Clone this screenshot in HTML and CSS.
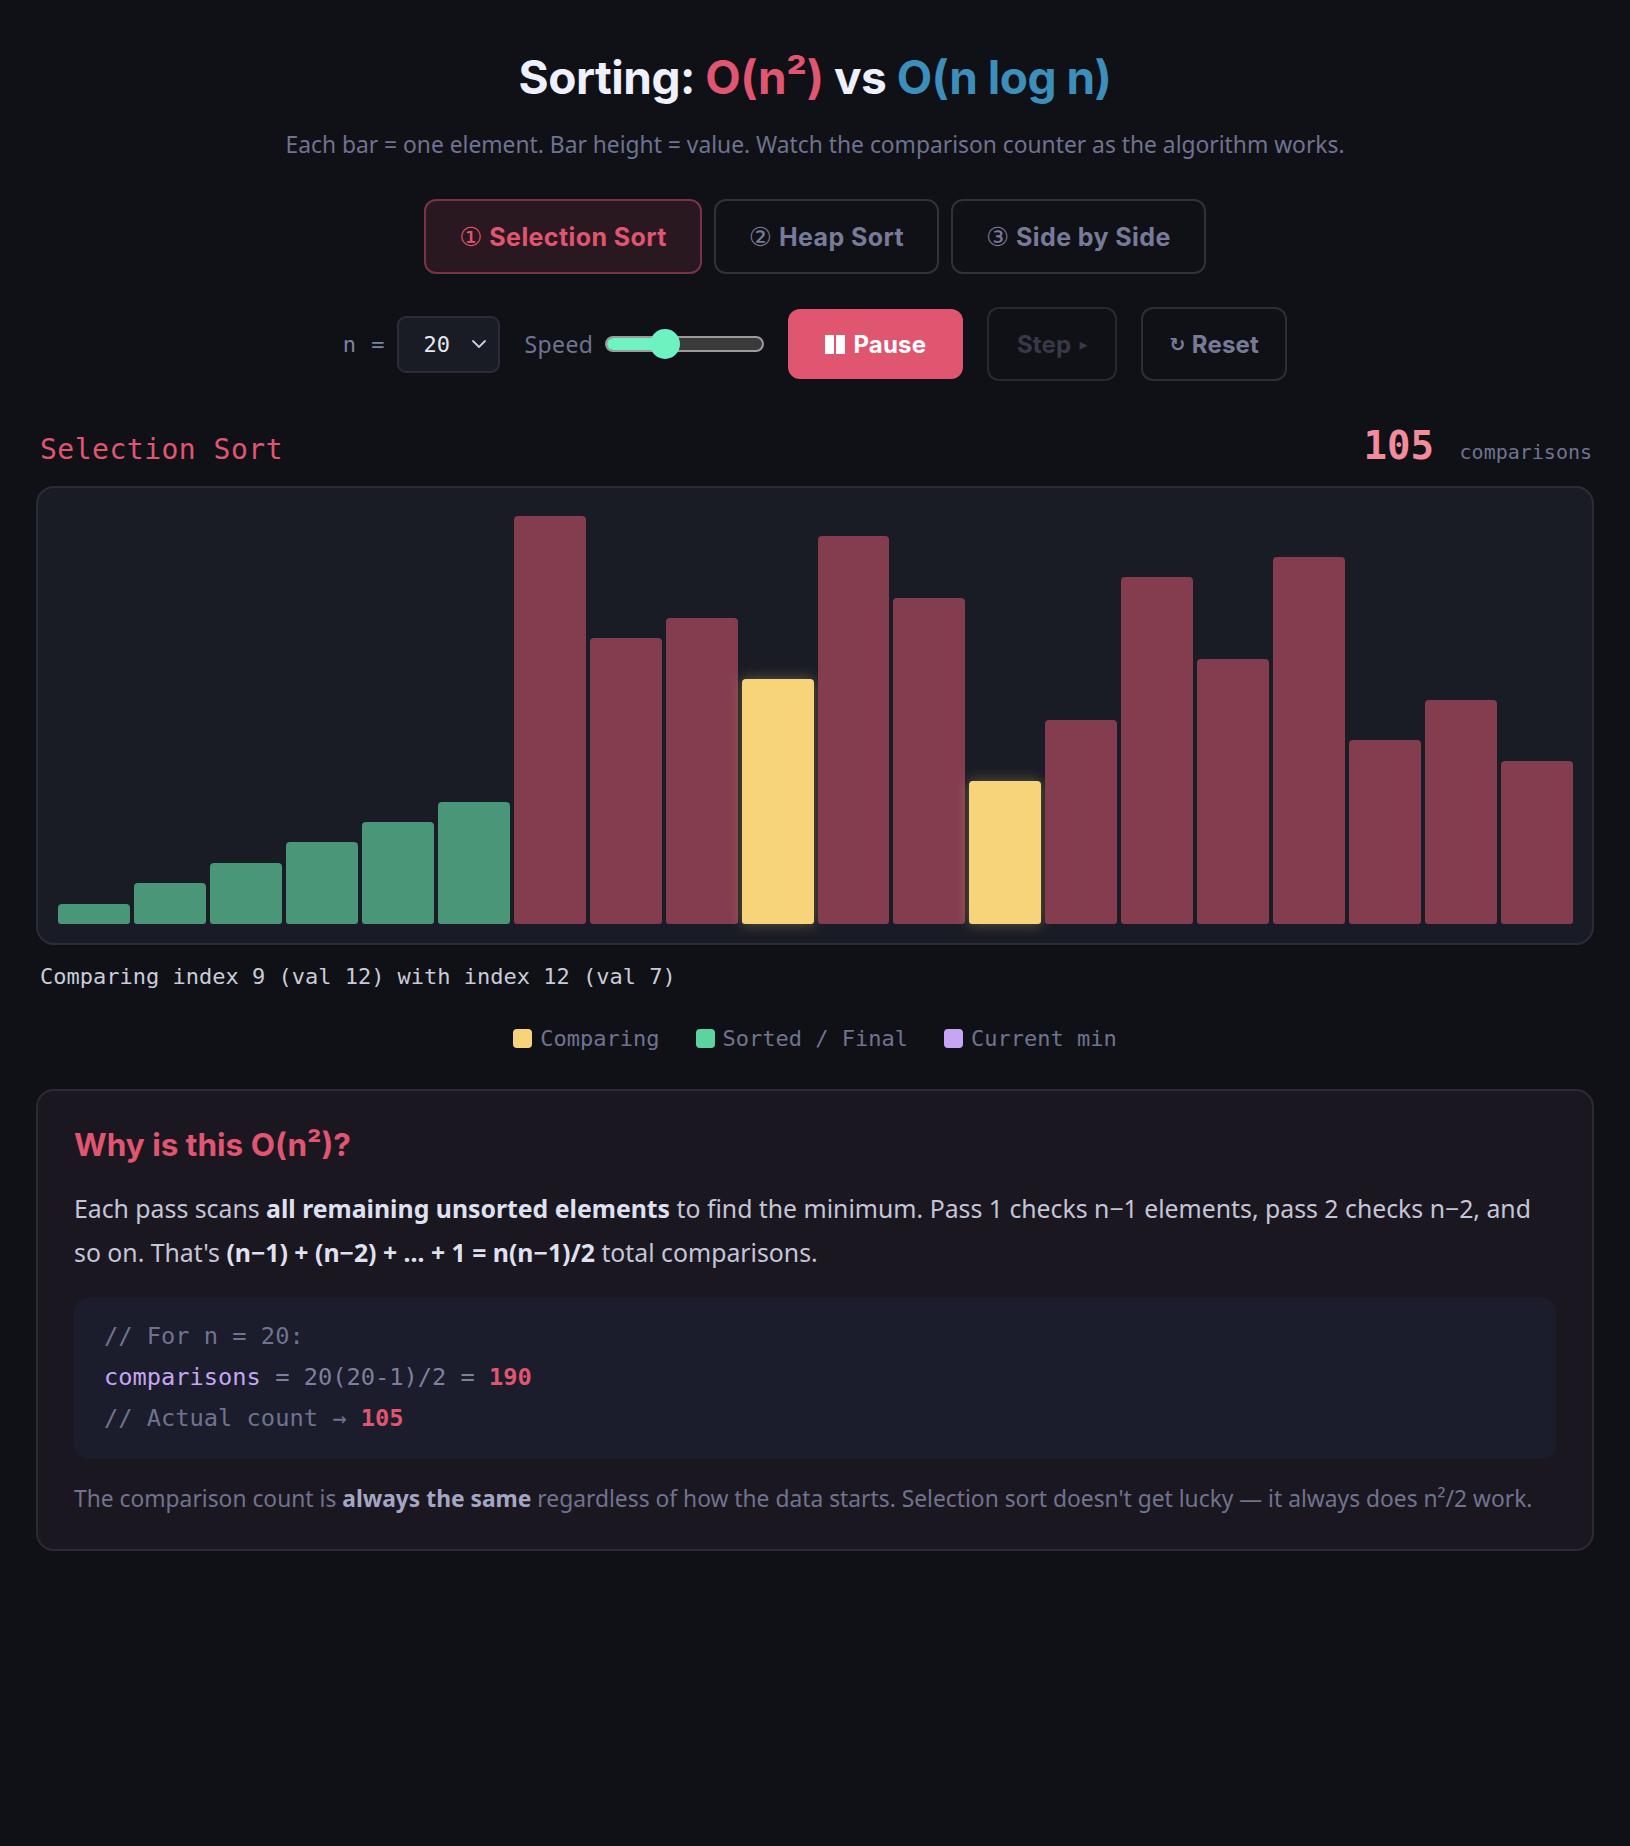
FILE: index.html
```html
<!DOCTYPE html>
<html lang="en">
<head>
<meta charset="utf-8">
<title>Sorting: O(n²) vs O(n log n)</title>
<link rel="stylesheet" href="styles.css">
</head>
<body>
<main class="page">
  <h1 class="title">Sorting: <span class="c-red">O(n²)</span> vs <span class="c-blue">O(n log n)</span></h1>
  <p class="subtitle">Each bar = one element. Bar height = value. Watch the comparison counter as the algorithm works.</p>

  <nav class="tabs">
    <button class="tab active"><span class="num">①</span> Selection Sort</button>
    <button class="tab"><span class="num">②</span> Heap Sort</button>
    <button class="tab"><span class="num">③</span> Side by Side</button>
  </nav>

  <div class="controls">
    <div class="group">
      <span class="n-label">n =</span>
      <div class="select"><span>20</span>
        <svg width="18" height="18" viewBox="0 0 18 18" class="chev"><path d="M3 6 L9 12 L15 6" fill="none" stroke="#c9cbd9" stroke-width="1.8" stroke-linecap="round" stroke-linejoin="round"/></svg>
      </div>
    </div>
    <div class="group">
      <span class="speed-label">Speed</span>
      <div class="slider"><div class="fill"></div><div class="thumb"></div></div>
    </div>
    <button class="btn btn-primary"><span class="pause-ico"><i></i><i></i></span>Pause</button>
    <button class="btn btn-ghost btn-step">Step <span class="tri">▸</span></button>
    <button class="btn btn-ghost btn-reset"><span class="reset-ico">↻</span>Reset</button>
  </div>

  <div class="viz-head">
    <span class="viz-name">Selection Sort</span>
    <span class="counter"><b>105</b> <span>comparisons</span></span>
  </div>

  <div class="chart">
    <div class="bars">
      <div class="bar sorted" style="height:5%"></div>
      <div class="bar sorted" style="height:10%"></div>
      <div class="bar sorted" style="height:15%"></div>
      <div class="bar sorted" style="height:20%"></div>
      <div class="bar sorted" style="height:25%"></div>
      <div class="bar sorted" style="height:30%"></div>
      <div class="bar" style="height:100%"></div>
      <div class="bar" style="height:70%"></div>
      <div class="bar" style="height:75%"></div>
      <div class="bar comparing" style="height:60%"></div>
      <div class="bar" style="height:95%"></div>
      <div class="bar" style="height:80%"></div>
      <div class="bar comparing" style="height:35%"></div>
      <div class="bar" style="height:50%"></div>
      <div class="bar" style="height:85%"></div>
      <div class="bar" style="height:65%"></div>
      <div class="bar" style="height:90%"></div>
      <div class="bar" style="height:45%"></div>
      <div class="bar" style="height:55%"></div>
      <div class="bar" style="height:40%"></div>
    </div>
  </div>

  <p class="status">Comparing index 9 (val 12) with index 12 (val 7)</p>

  <div class="legend">
    <span class="item"><i class="sw sw-yellow"></i>Comparing</span>
    <span class="item"><i class="sw sw-green"></i>Sorted / Final</span>
    <span class="item"><i class="sw sw-purple"></i>Current min</span>
  </div>

  <section class="explain">
    <h2>Why is this O(n²)?</h2>
    <p class="para">Each pass scans <strong>all remaining unsorted elements</strong> to find the minimum. Pass 1 checks n−1 elements, pass 2 checks n−2, and so on. That's <strong>(n−1) + (n−2) + ... + 1 = n(n−1)/2</strong> total comparisons.</p>
    <pre class="code"><span class="cm">// For n = 20:</span>
<span class="var">comparisons</span> <span class="op">= 20(20-1)/2 =</span> <span class="hl">190</span>
<span class="cm">// Actual count → </span><span class="hl">105</span></pre>
    <p class="note">The comparison count is <strong>always the same</strong> regardless of how the data starts. Selection sort doesn't get lucky — it always does n²/2 work.</p>
  </section>
</main>
</body>
</html>
```

FILE: styles.css
```css
* { box-sizing: border-box; }
html, body { margin: 0; padding: 0; }
body {
  background: #101117;
  color: #c4c6d8;
  font-family: "Noto Sans", sans-serif;
}
.page {
  padding: 50px 36px 60px;
}
.title {
  margin: 0;
  text-align: center;
  font-family: "Inter", sans-serif;
  font-weight: 700;
  font-size: 46px;
  line-height: 55px;
  letter-spacing: -0.5px;
  color: #eef0fb;
}
.c-red { color: #e05570; }
.c-blue { color: #3c8fba; }
.subtitle {
  margin: 24px 0 0;
  text-align: center;
  font-family: "Noto Sans", sans-serif;
  font-size: 22.8px;
  line-height: 31px;
  color: #6f7390;
}
.tabs {
  display: flex;
  justify-content: center;
  gap: 12px;
  margin-top: 39px;
}
.tab {
  height: 75px;
  padding: 0 33px;
  border: 2px solid #30313c;
  border-radius: 12px;
  background: transparent;
  color: #787b98;
  font-family: "Inter", sans-serif;
  font-weight: 700;
  font-size: 25px;
  letter-spacing: 0.4px;
}
.tab .num { font-family: "DejaVu Sans", sans-serif; font-weight: 400; font-size: 26px; }
.tab.active {
  background: #2a1820;
  border-color: #7a3345;
  color: #e05570;
}
.controls {
  display: flex;
  justify-content: center;
  align-items: center;
  gap: 24px;
  margin-top: 33px;
  height: 74px;
}
.group { display: flex; align-items: center; gap: 12px; }
.n-label {
  font-family: "DejaVu Sans Mono", monospace;
  font-size: 22px;
  letter-spacing: 1px;
  color: #7e82a2;
}
.select {
  width: 103px;
  height: 57px;
  border: 2px solid #2a2c38;
  border-radius: 9px;
  background: #1a1c25;
  display: flex;
  align-items: center;
  justify-content: space-between;
  padding: 0 10px 0 24px;
  font-family: "DejaVu Sans Mono", monospace;
  font-size: 22px;
  color: #e6e8f2;
}
.speed-label {
  font-family: "Noto Sans", sans-serif;
  font-size: 23px;
  letter-spacing: 0.4px;
  color: #6f7390;
}
.slider {
  position: relative;
  width: 159px;
  height: 16px;
  border: 2px solid #9b9b9b;
  border-radius: 9px;
  background: #3a3a3a;
}
.slider .fill {
  width: 37%;
  height: 100%;
  background: #6ef2c0;
  border-radius: 7px 0 0 7px;
}
.slider .thumb {
  position: absolute;
  left: 43px;
  top: 50%;
  width: 30px;
  height: 30px;
  margin-top: -15px;
  border-radius: 50%;
  background: #6ef2c0;
}
.btn {
  font-family: "Inter", sans-serif;
  font-weight: 700;
  font-size: 24px;
  letter-spacing: 0.2px;
  border-radius: 12px;
  display: inline-flex;
  align-items: center;
  justify-content: center;
}
.btn-primary {
  width: 175px;
  height: 70px;
  border: 0;
  background: #e05570;
  color: #ffffff;
  gap: 8px;
}
.pause-ico { display: inline-flex; gap: 2px; }
.pause-ico i { display: block; width: 9px; height: 19px; background: #fff; }
.btn-ghost {
  height: 74px;
  border: 2px solid #2d2e39;
  background: transparent;
  color: #787b98;
  padding: 0;
}
.btn-step { color: #373947; border-color: #272832; width: 130px; gap: 8px; }
.btn-reset { width: 146px; }
.tri { font-family: "DejaVu Sans", sans-serif; font-size: 16px; }
.reset-ico { font-family: "DejaVu Sans", sans-serif; font-size: 19px; margin-right: 6px; }

.viz-head {
  display: flex;
  justify-content: space-between;
  align-items: baseline;
  margin-top: 42px;
  padding: 0 2px 0 4px;
  height: 48px;
}
.viz-name {
  font-family: "DejaVu Sans Mono", monospace;
  font-size: 28px;
  letter-spacing: 0.5px;
  color: #e05570;
}
.counter { font-family: "DejaVu Sans Mono", monospace; }
.counter b { font-size: 39px; color: #f28b9b; margin-right: 16px; }
.counter span { font-size: 20px; color: #6f7390; }

.chart {
  margin-top: 15px;
  height: 459px;
  border: 2px solid #2a2c38;
  border-radius: 18px;
  background: #1a1c25;
  padding: 28px 19px 19px 20px;
}
.bars {
  height: 408px;
  display: flex;
  align-items: flex-end;
  gap: 4px;
}
.bar {
  flex: 1;
  background: #843d4f;
  border-radius: 4px 4px 3px 3px;
}
.bar.sorted { background: #4a9679; }
.bar.comparing { background: #f7d37a; box-shadow: 0 0 14px rgba(247, 211, 122, 0.35); }

.status {
  margin: 15px 0 0 4px;
  font-family: "DejaVu Sans Mono", monospace;
  font-size: 22px;
  line-height: 33px;
  color: #c9cbd9;
}
.legend {
  margin-top: 29px;
  display: flex;
  justify-content: center;
  gap: 36px;
  font-family: "DejaVu Sans Mono", monospace;
  font-size: 22px;
  line-height: 33px;
  color: #6f7390;
}
.legend .item { display: inline-flex; align-items: center; gap: 8px; }
.sw { display: block; width: 19px; height: 19px; border-radius: 4px; }
.sw-yellow { background: #f7d37a; }
.sw-green { background: #5dd4a0; }
.sw-purple { background: #c6a6f2; }

.explain {
  margin-top: 34px;
  border: 2px solid #2c2a35;
  border-radius: 18px;
  background: #1b1720;
  padding: 36px 36px 34px;
}
.explain h2 {
  margin: 0;
  font-family: "Inter", sans-serif;
  font-weight: 700;
  font-size: 31.5px;
  line-height: 36px;
  letter-spacing: 0;
  color: #e05570;
}
.para {
  margin: 24px 0 0;
  font-family: "Noto Sans", sans-serif;
  font-size: 24.8px;
  line-height: 43.5px;
  color: #c4c6d8;
}
.para strong { color: #dfe1f0; font-weight: 700; }
.code {
  margin: 24px 0 0;
  background: #1b1c2c;
  border-radius: 14px;
  padding: 18px 30px 20px;
  font-family: "DejaVu Sans Mono", monospace;
  font-size: 23.7px;
  line-height: 41px;
  color: #7d809c;
}
.code .cm { color: #6f7390; }
.code .var { color: #c6a6f2; }
.code .op { color: #7d809c; }
.code .hl { color: #e05570; font-weight: 700; }
.note {
  margin: 23px 0 0;
  font-family: "Noto Sans", sans-serif;
  font-size: 22.8px;
  line-height: 33px;
  color: #70738f;
}
.note strong { color: #a4a7c4; }
```
